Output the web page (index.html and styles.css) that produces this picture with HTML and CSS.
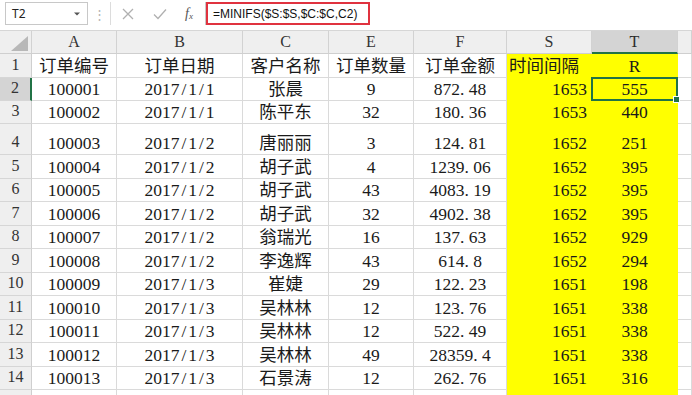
FILE: index.html
```html
<!DOCTYPE html>
<html lang="zh">
<head>
<meta charset="utf-8">
<link rel="stylesheet" href="styles.css">
</head>
<body>
<div class="app">
  <div class="fbar">
    <div class="namebox"><span>T2</span><svg class="caret" width="8" height="6" viewBox="0 0 8 6"><path d="M1 1.5 L4 4.5 L7 1.5" fill="#555"/></svg></div>
    <div class="grip">⋮</div>
    <div class="btns">
      <svg width="14" height="14" viewBox="0 0 14 14"><path d="M2 2 L12 12 M12 2 L2 12" stroke="#b0b0b0" stroke-width="1.3"/></svg>
      <svg width="16" height="14" viewBox="0 0 16 14"><path d="M2 7.5 L6 11.5 L14 2.5" stroke="#b0b0b0" stroke-width="1.3" fill="none"/></svg>
      <span class="fx">f<sub>x</sub></span>
    </div>
    <div class="formula"><span class="ftext">=MINIFS($S:$S,$C:$C,C2)</span></div>
  </div>
  <div class="sheet">
    <div class="row hdr">
      <div class="cell corner"><svg width="20" height="16" viewBox="0 0 20 16"><path d="M19 0 L19 15 L2 15 Z" fill="#b8b8b8"/></svg></div>
      <div class="cell ch">A</div><div class="cell ch">B</div><div class="cell ch">C</div><div class="cell ch">E</div><div class="cell ch">F</div><div class="cell ch">S</div><div class="cell ch sel">T</div><div class="cell ch"></div>
    </div>
    <div class="row r1">
      <div class="cell rh">1</div><div class="cell">订单编号</div><div class="cell">订单日期</div><div class="cell">客户名称</div><div class="cell">订单数量</div><div class="cell">订单金额</div><div class="cell y left">时间间隔</div><div class="cell y">R</div><div class="cell"></div>
    </div>
    <div class="row r2">
      <div class="cell rh sel">2</div><div class="cell">100001</div><div class="cell">2017<span class="s">/</span>1<span class="s">/</span>1</div><div class="cell">张晨</div><div class="cell">9</div><div class="cell">872<span class="d">.</span>48</div><div class="cell y right">1653</div><div class="cell y active">555</div><div class="cell"></div>
    </div>
    <div class="row r3">
      <div class="cell rh">3</div><div class="cell">100002</div><div class="cell">2017<span class="s">/</span>1<span class="s">/</span>1</div><div class="cell">陈平东</div><div class="cell">32</div><div class="cell">180<span class="d">.</span>36</div><div class="cell y right">1653</div><div class="cell y">440</div><div class="cell"></div>
    </div>
    <div class="row r4">
      <div class="cell rh">4</div><div class="cell">100003</div><div class="cell">2017<span class="s">/</span>1<span class="s">/</span>2</div><div class="cell">唐丽丽</div><div class="cell">3</div><div class="cell">124<span class="d">.</span>81</div><div class="cell y right">1652</div><div class="cell y">251</div><div class="cell"></div>
    </div>
    <div class="row">
      <div class="cell rh">5</div><div class="cell">100004</div><div class="cell">2017<span class="s">/</span>1<span class="s">/</span>2</div><div class="cell">胡子武</div><div class="cell">4</div><div class="cell">1239<span class="d">.</span>06</div><div class="cell y right">1652</div><div class="cell y">395</div><div class="cell"></div>
    </div>
    <div class="row">
      <div class="cell rh">6</div><div class="cell">100005</div><div class="cell">2017<span class="s">/</span>1<span class="s">/</span>2</div><div class="cell">胡子武</div><div class="cell">43</div><div class="cell">4083<span class="d">.</span>19</div><div class="cell y right">1652</div><div class="cell y">395</div><div class="cell"></div>
    </div>
    <div class="row">
      <div class="cell rh">7</div><div class="cell">100006</div><div class="cell">2017<span class="s">/</span>1<span class="s">/</span>2</div><div class="cell">胡子武</div><div class="cell">32</div><div class="cell">4902<span class="d">.</span>38</div><div class="cell y right">1652</div><div class="cell y">395</div><div class="cell"></div>
    </div>
    <div class="row">
      <div class="cell rh">8</div><div class="cell">100007</div><div class="cell">2017<span class="s">/</span>1<span class="s">/</span>2</div><div class="cell">翁瑞光</div><div class="cell">16</div><div class="cell">137<span class="d">.</span>63</div><div class="cell y right">1652</div><div class="cell y">929</div><div class="cell"></div>
    </div>
    <div class="row">
      <div class="cell rh">9</div><div class="cell">100008</div><div class="cell">2017<span class="s">/</span>1<span class="s">/</span>2</div><div class="cell">李逸辉</div><div class="cell">43</div><div class="cell">614<span class="d">.</span>8</div><div class="cell y right">1652</div><div class="cell y">294</div><div class="cell"></div>
    </div>
    <div class="row">
      <div class="cell rh">10</div><div class="cell">100009</div><div class="cell">2017<span class="s">/</span>1<span class="s">/</span>3</div><div class="cell">崔婕</div><div class="cell">29</div><div class="cell">122<span class="d">.</span>23</div><div class="cell y right">1651</div><div class="cell y">198</div><div class="cell"></div>
    </div>
    <div class="row">
      <div class="cell rh">11</div><div class="cell">100010</div><div class="cell">2017<span class="s">/</span>1<span class="s">/</span>3</div><div class="cell">吴林林</div><div class="cell">12</div><div class="cell">123<span class="d">.</span>76</div><div class="cell y right">1651</div><div class="cell y">338</div><div class="cell"></div>
    </div>
    <div class="row">
      <div class="cell rh">12</div><div class="cell">100011</div><div class="cell">2017<span class="s">/</span>1<span class="s">/</span>3</div><div class="cell">吴林林</div><div class="cell">12</div><div class="cell">522<span class="d">.</span>49</div><div class="cell y right">1651</div><div class="cell y">338</div><div class="cell"></div>
    </div>
    <div class="row">
      <div class="cell rh">13</div><div class="cell">100012</div><div class="cell">2017<span class="s">/</span>1<span class="s">/</span>3</div><div class="cell">吴林林</div><div class="cell">49</div><div class="cell">28359<span class="d">.</span>4</div><div class="cell y right">1651</div><div class="cell y">338</div><div class="cell"></div>
    </div>
    <div class="row">
      <div class="cell rh">14</div><div class="cell">100013</div><div class="cell">2017<span class="s">/</span>1<span class="s">/</span>3</div><div class="cell">石景涛</div><div class="cell">12</div><div class="cell">262<span class="d">.</span>76</div><div class="cell y right">1651</div><div class="cell y">316</div><div class="cell"></div>
    </div>
    <div class="row">
      <div class="cell rh"></div><div class="cell"></div><div class="cell"></div><div class="cell"></div><div class="cell"></div><div class="cell"></div><div class="cell y"></div><div class="cell y"></div><div class="cell"></div>
    </div>
  </div>
</div>
</body>
</html>
```

FILE: styles.css
```css
* { box-sizing: border-box; }
html, body { margin: 0; padding: 0; }
body {
  width: 692px;
  height: 395px;
  overflow: hidden;
  background: #ffffff;
  font-family: "Liberation Serif", "Noto Sans CJK SC", serif;
  color: #1a1a1a;
}
.app { display: flex; flex-direction: column; height: 395px; }

.fbar {
  height: 31px;
  display: flex;
  align-items: flex-start;
  padding-top: 2px;
  background: #ffffff;
  border-bottom: 1px solid #d6d6d6;
  font-family: "Noto Sans", "Liberation Sans", sans-serif;
}
.namebox {
  margin-left: 5px;
  width: 83px;
  height: 23px;
  border: 1px solid #c8c8c8;
  display: flex;
  align-items: center;
  justify-content: space-between;
  padding: 0 6px 0 6px;
  font-size: 12px;
  color: #222;
}
.caret { margin-top: 1px; }
.grip {
  width: 22px;
  height: 23px;
  display: flex;
  align-items: center;
  justify-content: center;
  color: #b5b5b5;
  font-size: 13px;
}
.btns {
  width: 95px;
  height: 23px;
  border-left: 1px solid #dcdcdc;
  display: flex;
  align-items: center;
  gap: 17px;
  padding-left: 10px;
}
.fx {
  font-family: "Liberation Serif", serif;
  font-style: italic;
  font-size: 14px;
  color: #555;
}
.fx sub { font-size: 9px; vertical-align: -1px; }
.formula {
  flex: 1;
  height: 23px;
  border-left: 1px solid #c8c8c8;
  display: flex;
  align-items: stretch;
}
.ftext {
  width: 164px;
  border: 2px solid #e0323f;
  padding-left: 5px;
  display: flex;
  align-items: center;
  font-family: "Liberation Sans", sans-serif;
  font-size: 12px;
  color: #111;
}

.sheet { display: flex; flex-direction: column; flex: 1; overflow: hidden; }
.row {
  display: grid;
  grid-template-columns: 32px 85px 126px 86px 85px 93px 85px 86px 1fr;
  height: 23.5px;
  flex: none;
}
.row.hdr { height: 23px; }
.row.r1 { height: 24px; }
.row.r2 { height: 23px; }
.row.r3 { height: 23px; }
.row.r4 { height: 31px; }

.cell {
  border-right: 1px solid #dadada;
  border-bottom: 1px solid #dadada;
  display: flex;
  align-items: flex-end;
  justify-content: center;
  padding: 0 4px 1px 4px;
  font-size: 17.5px;
  line-height: 20px;
  white-space: nowrap;
  overflow: visible;
}
.cell.left { justify-content: flex-start; padding-left: 2px; }
.cell.right { justify-content: flex-end; padding-right: 4px; }
.cell.y { background: #ffff00; border-right-color: #ffff00; border-bottom-color: #ffff00; }
.d { letter-spacing: 0.25em; }
.s { padding: 0 0.11em; }

.hdr .cell {
  background: #efefef;
  border-right: 1px solid #d2d2d2;
  border-bottom: 1px solid #cfcfcf;
  font-size: 16px;
  color: #333;
  align-items: center;
  padding-bottom: 0;
}
.hdr .corner { justify-content: flex-end; align-items: flex-end; padding: 0 2px 1px 0; }
.hdr .ch.sel {
  background: #d4d4d4;
  border-bottom: 2px solid #217346;
  color: #2a2a2a;
}
.cell.rh {
  background: #efefef;
  border-right: 1px solid #cfcfcf;
  border-bottom: 1px solid #d6d6d6;
  font-size: 16px;
  color: #333;
  justify-content: center;
  padding: 0 0 2px 0;
}
.cell.rh.sel {
  background: #d4d4d4;
  border-right: 2px solid #217346;
}
.cell.active { position: relative; }
.cell.active::before {
  content: "";
  position: absolute;
  left: -1px; top: -1px; right: -1px; bottom: -1px;
  border: 2px solid #217346;
}
.cell.active::after {
  content: "";
  position: absolute;
  right: -3px; bottom: -3px;
  width: 5px; height: 5px;
  background: #217346;
  border: 1px solid #ffffff;
}
```
